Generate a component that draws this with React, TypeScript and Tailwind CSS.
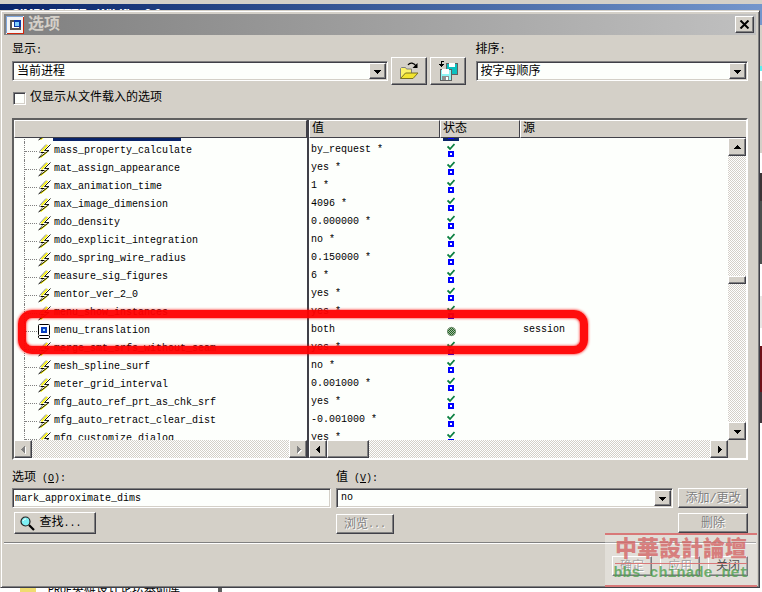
import { useState } from "react";
import type { ReactNode } from "react";
import clsx from "clsx";

const RAISED =
  "border border-t-white border-l-white border-r-[#404048] border-b-[#404048] bg-[#d4d0c8] shadow-[inset_-1px_-1px_0_#808080]";
const SUNKEN =
  "border border-t-[#808080] border-l-[#808080] border-r-white border-b-white shadow-[inset_1px_1px_0_#404048,inset_-1px_-1px_0_#d4d0c8]";
const TRACK =
  "bg-[repeating-conic-gradient(#ffffff_0_25%,#d4d0c8_0_50%)] bg-[length:2px_2px]";
const HEAD_CELL =
  "h-[18px] border border-t-white border-l-white border-r-[#404048] border-b-[#404048] bg-[#d4d0c8] pl-0.5 text-left font-normal leading-4";

type Option = {
  name: string;
  value: string;
  source?: string;
  selected?: boolean;
};

const options: Option[] = [
  { name: "mark_approximate_dims", value: "no", selected: true },
  { name: "mass_property_calculate", value: "by_request *" },
  { name: "mat_assign_appearance", value: "yes *" },
  { name: "max_animation_time", value: "1 *" },
  { name: "max_image_dimension", value: "4096 *" },
  { name: "mdo_density", value: "0.000000 *" },
  { name: "mdo_explicit_integration", value: "no *" },
  { name: "mdo_spring_wire_radius", value: "0.150000 *" },
  { name: "measure_sig_figures", value: "6 *" },
  { name: "mentor_ver_2_0", value: "yes *" },
  { name: "menu_show_instances", value: "yes *" },
  { name: "menu_translation", value: "both", source: "session" },
  { name: "merge_smt_srfs_without_seam", value: "yes *" },
  { name: "mesh_spline_surf", value: "no *" },
  { name: "meter_grid_interval", value: "0.001000 *" },
  { name: "mfg_auto_ref_prt_as_chk_srf", value: "yes *" },
  { name: "mfg_auto_retract_clear_dist", value: "-0.001000 *" },
  { name: "mfg_customize_dialog", value: "yes *" },
];

function Ascii({ children }: { children: ReactNode }) {
  return <span className="text-[10px]">{children}</span>;
}

function Arrow({ dir, dim }: { dir: "up" | "down" | "left" | "right"; dim?: boolean }) {
  const d = {
    up: "M4 2h1v1h1v1h1v1h1v1H1V5h1V4h1V3h1z",
    down: "M1 3h7v1H7v1H6v1H5v1H4V6H3V5H2V4H1z",
    left: "M6 1v7H5V7H4V6H3V5H2V4h1V3h1V2h1V1z",
    right: "M3 1v7h1V7h1V6h1V5h1V4H6V3H5V2H4V1z",
  }[dir];
  return (
    <svg width="9" height="9" viewBox="0 0 9 9" shapeRendering="crispEdges" aria-hidden="true">
      {dim && <path d={d} fill="#fff" transform="translate(1 1)" />}
      <path d={d} fill={dim ? "#808080" : "#000"} />
    </svg>
  );
}

function ScrollButton({ dir, dim }: { dir: "up" | "down" | "left" | "right"; dim?: boolean }) {
  return (
    <button
      type="button"
      aria-label={dir}
      disabled={dim}
      className={clsx(RAISED, "flex size-[18px] shrink-0 items-center justify-center")}
    >
      <Arrow dir={dir} dim={dim} />
    </button>
  );
}

function Combo({ id, items, mono }: { id: string; items: string[]; mono?: boolean }) {
  return (
    <div className="relative">
      <select
        id={id}
        className={clsx(
          SUNKEN,
          "block h-5 w-full appearance-none bg-[#fdfffc] pl-1 leading-4 outline-none",
          mono ? "pl-0.5 text-[10px]" : "pt-px text-[12px]"
        )}
      >
        {items.map((item) => (
          <option key={item}>{item}</option>
        ))}
      </select>
      <span
        className={clsx(
          RAISED,
          "pointer-events-none absolute inset-y-0.5 right-0.5 flex w-[17px] items-center justify-center"
        )}
      >
        <Arrow dir="down" />
      </span>
    </div>
  );
}

function TextButton({
  children,
  disabled,
  className,
}: {
  children: ReactNode;
  disabled?: boolean;
  className?: string;
}) {
  return (
    <button
      type="button"
      disabled={disabled}
      className={clsx(
        RAISED,
        "flex items-center justify-center pt-px leading-4 whitespace-nowrap",
        disabled && "text-[#808080] [text-shadow:1px_1px_0_#fff]",
        className
      )}
    >
      {children}
    </button>
  );
}

function AppIcon() {
  return (
    <svg width="18" height="18" viewBox="0 0 18 18" shapeRendering="crispEdges" aria-hidden="true">
      <path d="M0 0h18v18H0z" fill="#f4f4f4" />
      <path d="M0 0h17v1H1v16H0z" fill="#7ea6dc" />
      <path d="M17 1h1v17H1v-1h16z" fill="#d0260c" />
      <path d="M4 4h11v10H4z" fill="#555" />
      <path d="M6 6h7v6H6z" fill="#fff" />
      <path d="M8 4h7v7H8z" fill="#0a3aa8" />
      <path d="M9 6h4v4H9z" fill="#7ed0ff" />
    </svg>
  );
}

function BoltIcon() {
  return (
    <svg width="13" height="15" viewBox="0 0 13 15" className="shrink-0" aria-hidden="true">
      <path d="M8 1h4L7 7h4L1 14l4-5H2z" fill="#fff" />
      <path d="M9.500 1 3.500 7.500M9 8 2.500 13.500" fill="none" stroke="#f6f000" strokeWidth="1.600" />
      <path d="M8 .5 1.500 7.500V8.500H5L1.500 13" fill="none" stroke="#808080" strokeWidth=".9" />
      <path d="M12.500 .5 6.500 6.500H11L5 11 .5 14" fill="none" stroke="#000" strokeWidth=".9" />
      <path d="M3 8.500h3.500" stroke="#000" />
    </svg>
  );
}

function SessionIcon() {
  return (
    <svg width="13" height="15" viewBox="0 0 13 15" className="shrink-0" aria-hidden="true">
      <rect x=".5" y=".5" width="11" height="11" rx="1" fill="#fff" stroke="#000" />
      <path d="M3 3h6v6H3z" fill="#0a3fc0" />
      <path d="M5 5h2v2H5z" fill="#8fe0ff" />
      <path d="M.5 12v1.500l1 1h9l1-1V12" fill="#fff" stroke="#000" />
    </svg>
  );
}

function StatusIcon() {
  return (
    <svg width="8" height="15" viewBox="0 0 8 15" aria-hidden="true">
      <path d="M.5 3.500 3 6 7.500 1" fill="none" stroke="#0a8040" strokeWidth="1.800" />
      <path d="M1 8h6v6H1z" fill="#0000ff" shapeRendering="crispEdges" />
      <path d="M3 10h2v2H3z" fill="#fff" shapeRendering="crispEdges" />
    </svg>
  );
}

function DotIcon() {
  return (
    <svg width="9" height="15" viewBox="0 0 9 15" aria-hidden="true">
      <defs>
        <pattern id="dither" width="2" height="2" patternUnits="userSpaceOnUse">
          <path d="M0 0h2v2H0z" fill="#a8b4a8" />
          <path d="M0 0h1v1H0zM1 1h1v1H1z" fill="#1e6a1e" />
        </pattern>
      </defs>
      <circle cx="4.500" cy="8.500" r="4.200" fill="url(#dither)" stroke="#5c7a5c" strokeWidth=".6" />
    </svg>
  );
}

function OpenIcon() {
  return (
    <svg width="20" height="18" viewBox="0 0 20 18" aria-hidden="true">
      <path d="M1.500 16.500v-10l1-1h4l1 1.500h5v4" fill="#fbf36a" stroke="#808080" />
      <path d="M1.500 16.500l5-5.500h12.500l-5 5.500z" fill="#f2e530" stroke="#7a7420" />
      <path d="M9 3c2-3 6-2.500 8.500 1.500" fill="none" stroke="#000" strokeWidth="1.300" />
      <path d="M18.500 1v5h-5z" fill="#000" />
    </svg>
  );
}

function SaveIcon() {
  return (
    <svg width="20" height="20" viewBox="0 0 20 20" shapeRendering="crispEdges" aria-hidden="true">
      <path d="M8 2h11v11H8z" fill="#0ac0c0" stroke="#606060" />
      <path d="M11 2h6v4h-6z" fill="#fff" />
      <path d="M2 8h11v11H2z" fill="#8ff4f4" stroke="#606060" />
      <path d="M4 8h7v5H4z" fill="#fff" />
      <path d="M4 15h7v4H4z" fill="#909090" />
      <path d="M8 16h2v3H8z" fill="#fff" />
      <path d="M3 0h3v1H4v2h2v1H5v1H4v1H3V5H2V4H1V3h2z" fill="#000" />
    </svg>
  );
}

function FindIcon() {
  return (
    <svg width="15" height="15" viewBox="0 0 15 15" aria-hidden="true">
      <circle cx="5.500" cy="5.500" r="4.500" fill="#7ef0f4" stroke="#202020" strokeWidth="1.200" />
      <path d="M3 5c.5-1.500 1.500-2 3-2" fill="none" stroke="#fff" />
      <path d="M9 9l5 5" stroke="#000" strokeWidth="2.200" />
    </svg>
  );
}

function OptionTree() {
  return (
    <div className="w-[295px] shrink-0 border-r-2 border-[#404048]">
      <table className="block">
        <thead className="block">
          <tr className="block">
            <th className={clsx(HEAD_CELL, "block")} aria-label="选项" />
          </tr>
        </thead>
        <tbody className="block h-[302px] overflow-hidden">
          {options.map((o, i) => (
            <tr key={o.name} className={clsx("block pl-2.5", i === 0 && "-mt-3.5")}>
              <td className="flex h-[18px] items-center border-l border-dotted border-[#808080]">
                <span className="w-3 shrink-0 border-t border-dotted border-[#808080]" />
                <span className="w-4 pl-px">{o.source ? <SessionIcon /> : <BoltIcon />}</span>
                <span
                  className={clsx(
                    "px-px text-[10px] leading-4",
                    o.selected && "bg-[#0a246a] text-white"
                  )}
                >
                  {o.name}
                </span>
              </td>
            </tr>
          ))}
        </tbody>
      </table>
      <div className={clsx(TRACK, "flex justify-between")}>
        <ScrollButton dir="left" dim />
        <ScrollButton dir="right" dim />
      </div>
    </div>
  );
}

function ValueTable() {
  return (
    <div className="flex min-w-0 flex-1">
      <div className="min-w-0 flex-1">
        <table className="block">
          <thead className="block">
            <tr className="grid grid-cols-[131px_80px_1fr]">
              <th className={HEAD_CELL}>值</th>
              <th className={HEAD_CELL}>状态</th>
              <th className={clsx(HEAD_CELL, "border-r-0")}>源</th>
            </tr>
          </thead>
          <tbody className="block h-[302px] overflow-hidden">
            {options.map((o, i) => (
              <tr
                key={o.name}
                className={clsx(
                  "grid h-[18px] grid-cols-[131px_80px_1fr] items-center text-[10px] leading-4",
                  i === 0 && "-mt-[15px]"
                )}
              >
                <td className="pl-0.5">{o.value}</td>
                <td className="pl-[3px]">
                  <span
                    className={clsx(
                      "flex h-[18px] w-4 items-center justify-center",
                      o.selected && "bg-[#0a246a]"
                    )}
                  >
                    {o.source ? <DotIcon /> : <StatusIcon />}
                  </span>
                </td>
                <td className="pl-[3px]">{o.source}</td>
              </tr>
            ))}
          </tbody>
        </table>
        <div className={clsx(TRACK, "flex")}>
          <ScrollButton dir="left" />
          <span className={clsx(RAISED, "w-[42px]")} />
          <span className="flex-1" />
          <ScrollButton dir="right" />
        </div>
      </div>
      <div className="flex w-[18px] shrink-0 flex-col">
        <div className="h-[18px] border-t border-b border-t-white border-b-[#404048]" />
        <div className={clsx(TRACK, "flex flex-1 flex-col")}>
          <ScrollButton dir="up" />
          <span className="flex-1" />
          <span className={clsx(RAISED, "h-2")} />
          <span className="h-[138px]" />
          <ScrollButton dir="down" />
        </div>
        <div className="h-[18px]" />
      </div>
    </div>
  );
}

function Watermark() {
  return (
    <div className="pointer-events-none absolute right-0.5 bottom-0 flex h-[54px] w-[152px] flex-col items-center border-y-2 border-[#d87878] bg-white/30 pt-1">
      <span className="border-b border-[#d87878] text-[22px] leading-6 font-black text-[#d46464]/80">
        中華設計論壇
      </span>
      <span className="text-[15px] leading-5 font-bold text-[#4fa04f]/80">bbs.chinade.net</span>
    </div>
  );
}

/* slice of the window that sits to the right, behind the dialog */
function BackdropEdge() {
  return (
    <div className="flex w-0.5 shrink-0 flex-col bg-white">
      <span className="h-[15px] bg-[#7496cc]" />
      <span className="h-[41px] bg-[#d4d0c8]" />
      <span className="h-[5px] bg-[#5ff0f0]" />
      <span className="h-[10px]" />
      <span className="h-[72px] bg-[#d4d0c8]" />
      <span className="h-[20px]" />
      <span className="h-[28px] bg-[#3c3436]" />
      <span className="h-[63px] bg-[#4c504e]" />
      <span className="h-[32px]" />
      <span className="h-[32px] bg-[#e8e6e4]" />
      <span className="h-[18px]" />
      <span className="h-[46px] bg-[#701018]" />
      <span className="h-[31px] bg-[#40383c]" />
    </div>
  );
}

export default function App() {
  const [onlyLoaded, setOnlyLoaded] = useState(false);
  const [name, setName] = useState("mark_approximate_dims");

  return (
    <div className="flex min-h-screen flex-col bg-white font-['Liberation_Mono','Noto_Sans_CJK_SC',monospace] text-[12px] text-black">
      {/* Parent window title */}
      <div className="h-2.5 overflow-hidden border-t-4 border-[#d4d0c8] bg-linear-to-r from-[#0a246a] to-[#7496cc] pl-3 font-['Liberation_Sans',sans-serif] text-[12px] leading-5 font-bold text-white">
        SIMPLETTTE - Wildfire 2.0
      </div>

      <div className="flex">
        <main className="relative min-w-0 flex-1 border border-t-[#d4d0c8] border-r-[#404048] border-b-[#404048] border-l-[#d4d0c8] bg-[#d4d0c8] p-[3px] shadow-[inset_1px_1px_0_#fff,inset_-1px_-1px_0_#808080]">
          {/* Title bar */}
          <div className="flex h-[21px] items-center gap-1 bg-linear-to-r from-[#808080] to-[#c0c0c0] pr-0.5 pl-0.5">
            <AppIcon />
            <h1 className="flex-1 text-[16px] leading-5 font-bold text-[#d4d0c8]">选项</h1>
            <button
              type="button"
              aria-label="关闭"
              className={clsx(RAISED, "flex h-[17px] w-[19px] items-center justify-center")}
            >
              <svg width="11" height="9" viewBox="0 0 11 9" aria-hidden="true">
                <path d="M1.500 .5l8 8M9.500 .5l-8 8" stroke="#000" strokeWidth="2" />
              </svg>
            </button>
          </div>

          <div className="px-2 pb-2">
            {/* Display / sort */}
            <div className="flex items-end pt-[7px]">
              <div className="flex min-w-0 flex-[375] flex-col gap-[3px] pb-1">
                <label htmlFor="show" className="h-4 leading-4">
                  显示<Ascii>:</Ascii>
                </label>
                <Combo id="show" items={["当前进程"]} />
              </div>
              <button
                type="button"
                aria-label="打开"
                className={clsx(RAISED, "ml-[3px] flex h-7 w-9 items-center justify-center")}
              >
                <OpenIcon />
              </button>
              <button
                type="button"
                aria-label="保存"
                className={clsx(RAISED, "ml-[3px] flex h-7 w-9 items-center justify-center")}
              >
                <SaveIcon />
              </button>
              <div className="ml-2.5 flex min-w-0 flex-[272] flex-col gap-[3px] pb-1">
                <label htmlFor="sort" className="h-4 leading-4">
                  排序<Ascii>:</Ascii>
                </label>
                <Combo id="sort" items={["按字母顺序"]} />
              </div>
            </div>

            <label className="mt-[5px] flex items-center gap-1 pl-px leading-4">
              <input
                type="checkbox"
                checked={onlyLoaded}
                onChange={(e) => setOnlyLoaded(e.target.checked)}
                className={clsx(SUNKEN, "size-[13px] appearance-none bg-[#fdfffc] checked:bg-[#404048]")}
              />
              仅显示从文件载入的选项
            </label>

            {/* Option list */}
            <div className="relative mt-3 border-2 border-t-[#606060] border-r-white border-b-white border-l-[#606060]">
              <div className="flex bg-[#d4d0c8] [&_tbody]:bg-[#fdfffc]">
                <OptionTree />
                <ValueTable />
              </div>
              <div className="pointer-events-none absolute top-[190px] left-1 h-11 w-[570px] rounded-[14px] border-8 border-[#ff0000]/95 shadow-[0_0_3px_#ff0000,inset_0_0_3px_#ff0000]" />
            </div>

            {/* Edit area */}
            <div className="mt-2.5 flex gap-[5px]">
              <div className="flex min-w-0 flex-[319] flex-col">
                <label htmlFor="option" className="mb-0.5 h-4 leading-4">
                  选项<Ascii> (<u>O</u>):</Ascii>
                </label>
                <input
                  id="option"
                  type="text"
                  value={name}
                  onChange={(e) => setName(e.target.value)}
                  className={clsx(SUNKEN, "h-5 w-full bg-[#fdfffc] pl-0.5 text-[10px] outline-none")}
                />
                <TextButton className="mt-1 ml-0.5 h-[22px] w-[82px] gap-1 pr-2">
                  <FindIcon />
                  <span>
                    查找<Ascii>...</Ascii>
                  </span>
                </TextButton>
              </div>
              <div className="flex min-w-0 flex-[337] flex-col">
                <label htmlFor="value" className="mb-0.5 h-4 leading-4">
                  值<Ascii> (<u>V</u>):</Ascii>
                </label>
                <Combo id="value" items={["no"]} mono />
                <TextButton disabled className="mt-1.5 h-5 w-[58px]">
                  浏览<Ascii>...</Ascii>
                </TextButton>
              </div>
              <div className="flex w-[70px] flex-col gap-[5px] pt-[18px]">
                <TextButton disabled className="h-5">
                  添加/更改
                </TextButton>
                <TextButton disabled className="h-5">
                  删除
                </TextButton>
              </div>
            </div>

            <hr className="-mx-2 mt-2 border-t border-b border-t-[#808080] border-b-white" />

            <div className="mt-3 flex justify-end gap-2">
              <TextButton disabled className="h-5 w-10">
                确定
              </TextButton>
              <TextButton disabled className="h-5 w-10">
                应用
              </TextButton>
              <TextButton className="h-5 w-10">关闭</TextButton>
            </div>
          </div>

          <Watermark />
        </main>
        <BackdropEdge />
      </div>

      {/* Folder list showing under the dialog */}
      <div className="flex h-1 items-center overflow-hidden pl-5">
        <span className="h-1 w-4 bg-[#f0dc70]" />
        <span className="ml-3 w-[170px] leading-4">
          <Ascii>PROE</Ascii>英雄设计论坛基础库
        </span>
        <span className="h-1 w-1 bg-[#606060]" />
      </div>
    </div>
  );
}
